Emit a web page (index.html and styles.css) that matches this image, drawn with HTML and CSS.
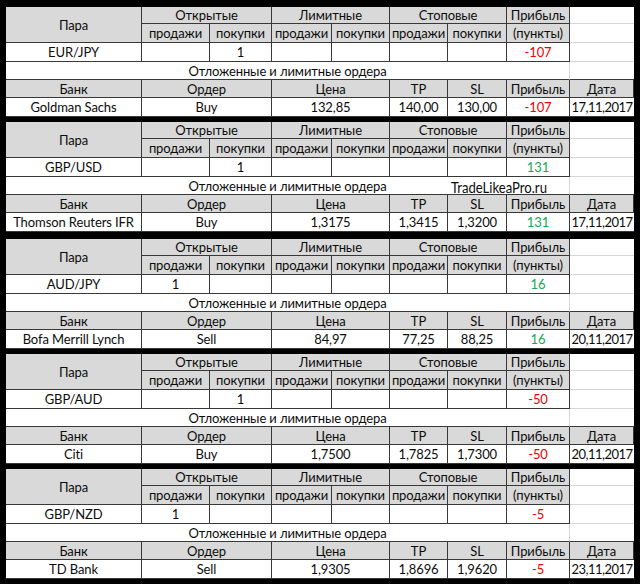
FILE: index.html
```html
<!DOCTYPE html>
<html lang="ru">
<head>
<meta charset="utf-8">
<title>Ордера банков</title>
<link rel="stylesheet" href="styles.css">
</head>
<body>
<div class="sheet">

  <div class="block">
    <div class="c h para">Пара</div>
    <div class="c h s2">Открытые</div>
    <div class="c h s2">Лимитные</div>
    <div class="c h s2">Стоповые</div>
    <div class="c h">Прибыль</div>
    <div class="c g"></div>
    <div class="c h">продажи</div><div class="c h">покупки</div>
    <div class="c h">продажи</div><div class="c h">покупки</div>
    <div class="c h">продажи</div><div class="c h">покупки</div>
    <div class="c h">(пункты)</div>
    <div class="c g"></div>
    <div class="c">EUR/JPY</div><div class="c"></div><div class="c">1</div>
    <div class="c"></div><div class="c"></div><div class="c"></div><div class="c"></div>
    <div class="c neg">-107</div><div class="c g"></div>
    <div class="c wide">Отложенные и лимитные ордера</div><div class="c g g4"></div>
    <div class="c h">Банк</div><div class="c h s2">Ордер</div><div class="c h s2">Цена</div>
    <div class="c h">TP</div><div class="c h">SL</div><div class="c h">Прибыль</div><div class="c h">Дата</div>
    <div class="c">Goldman Sachs</div><div class="c s2">Buy</div><div class="c s2">132,85</div>
    <div class="c">140,00</div><div class="c">130,00</div><div class="c neg">-107</div><div class="c date">17,11,2017</div>
  </div>

  <div class="block">
    <div class="c h para">Пара</div>
    <div class="c h s2">Открытые</div>
    <div class="c h s2">Лимитные</div>
    <div class="c h s2">Стоповые</div>
    <div class="c h">Прибыль</div>
    <div class="c g"></div>
    <div class="c h">продажи</div><div class="c h">покупки</div>
    <div class="c h">продажи</div><div class="c h">покупки</div>
    <div class="c h">продажи</div><div class="c h">покупки</div>
    <div class="c h">(пункты)</div>
    <div class="c g"></div>
    <div class="c">GBP/USD</div><div class="c"></div><div class="c">1</div>
    <div class="c"></div><div class="c"></div><div class="c"></div><div class="c"></div>
    <div class="c pos">131</div><div class="c g"></div>
    <div class="c wide">Отложенные и лимитные ордера</div><div class="c g g4"></div>
    <div class="mark"><span class="mark-text">TradeLikeaPro.ru</span></div>
    <div class="c h">Банк</div><div class="c h s2">Ордер</div><div class="c h s2">Цена</div>
    <div class="c h">TP</div><div class="c h">SL</div><div class="c h">Прибыль</div><div class="c h">Дата</div>
    <div class="c">Thomson Reuters IFR</div><div class="c s2">Buy</div><div class="c s2">1,3175</div>
    <div class="c">1,3415</div><div class="c">1,3200</div><div class="c pos">131</div><div class="c date">17,11,2017</div>
  </div>

  <div class="block shifted">
    <div class="c h para">Пара</div>
    <div class="c h s2">Открытые</div>
    <div class="c h s2">Лимитные</div>
    <div class="c h s2">Стоповые</div>
    <div class="c h">Прибыль</div>
    <div class="c g"></div>
    <div class="c h">продажи</div><div class="c h">покупки</div>
    <div class="c h">продажи</div><div class="c h">покупки</div>
    <div class="c h">продажи</div><div class="c h">покупки</div>
    <div class="c h">(пункты)</div>
    <div class="c g"></div>
    <div class="c">AUD/JPY</div><div class="c">1</div><div class="c"></div>
    <div class="c"></div><div class="c"></div><div class="c"></div><div class="c"></div>
    <div class="c pos">16</div><div class="c g"></div>
    <div class="c wide">Отложенные и лимитные ордера</div><div class="c g g4"></div>
    <div class="c h">Банк</div><div class="c h s2">Ордер</div><div class="c h s2">Цена</div>
    <div class="c h">TP</div><div class="c h">SL</div><div class="c h">Прибыль</div><div class="c h">Дата</div>
    <div class="c">Bofa Merrill Lynch</div><div class="c s2">Sell</div><div class="c s2">84,97</div>
    <div class="c">77,25</div><div class="c">88,25</div><div class="c pos">16</div><div class="c date">20,11,2017</div>
  </div>

  <div class="block">
    <div class="c h para">Пара</div>
    <div class="c h s2">Открытые</div>
    <div class="c h s2">Лимитные</div>
    <div class="c h s2">Стоповые</div>
    <div class="c h">Прибыль</div>
    <div class="c g"></div>
    <div class="c h">продажи</div><div class="c h">покупки</div>
    <div class="c h">продажи</div><div class="c h">покупки</div>
    <div class="c h">продажи</div><div class="c h">покупки</div>
    <div class="c h">(пункты)</div>
    <div class="c g"></div>
    <div class="c">GBP/AUD</div><div class="c"></div><div class="c">1</div>
    <div class="c"></div><div class="c"></div><div class="c"></div><div class="c"></div>
    <div class="c neg">-50</div><div class="c g"></div>
    <div class="c wide">Отложенные и лимитные ордера</div><div class="c g g4"></div>
    <div class="c h">Банк</div><div class="c h s2">Ордер</div><div class="c h s2">Цена</div>
    <div class="c h">TP</div><div class="c h">SL</div><div class="c h">Прибыль</div><div class="c h">Дата</div>
    <div class="c">Citi</div><div class="c s2">Buy</div><div class="c s2">1,7500</div>
    <div class="c">1,7825</div><div class="c">1,7300</div><div class="c neg">-50</div><div class="c date">20,11,2017</div>
  </div>

  <div class="block">
    <div class="c h para">Пара</div>
    <div class="c h s2">Открытые</div>
    <div class="c h s2">Лимитные</div>
    <div class="c h s2">Стоповые</div>
    <div class="c h">Прибыль</div>
    <div class="c g"></div>
    <div class="c h">продажи</div><div class="c h">покупки</div>
    <div class="c h">продажи</div><div class="c h">покупки</div>
    <div class="c h">продажи</div><div class="c h">покупки</div>
    <div class="c h">(пункты)</div>
    <div class="c g"></div>
    <div class="c">GBP/NZD</div><div class="c">1</div><div class="c"></div>
    <div class="c"></div><div class="c"></div><div class="c"></div><div class="c"></div>
    <div class="c neg">-5</div><div class="c g"></div>
    <div class="c wide">Отложенные и лимитные ордера</div><div class="c g g4"></div>
    <div class="c h">Банк</div><div class="c h s2">Ордер</div><div class="c h s2">Цена</div>
    <div class="c h">TP</div><div class="c h">SL</div><div class="c h">Прибыль</div><div class="c h">Дата</div>
    <div class="c">TD Bank</div><div class="c s2">Sell</div><div class="c s2">1,9305</div>
    <div class="c">1,8696</div><div class="c">1,9620</div><div class="c neg">-5</div><div class="c date">23,11,2017</div>
  </div>

</div>
</body>
</html>
```

FILE: styles.css
```css
html, body {
  margin: 0;
  padding: 0;
  background: #000;
}

.sheet {
  width: 640px;
  height: 584px;
  box-sizing: border-box;
  padding: 7px 6px 0 6px;
  display: flex;
  flex-direction: column;
  gap: 5px;
  overflow: hidden;
  font-family: "Lato", "Open Sans", sans-serif;
  font-size: 13px;
  letter-spacing: -0.1px;
  color: #0c0c0c;
}

.block {
  display: grid;
  grid-template-columns: 136px 68px 62px 60px 58px 58px 59px 63px 64px;
  grid-template-rows: 17px 19px 19px 18px 18px 19px;
  background: #fff;
}

.shifted {
  margin-top: 2px;
}

.c {
  box-sizing: border-box;
  background: #fff;
  border-right: 1px solid #383838;
  border-bottom: 1px solid #383838;
  display: flex;
  align-items: center;
  justify-content: center;
  white-space: nowrap;
  line-height: 1;
  padding-top: 1px;
}

.date {
  letter-spacing: -0.5px;
  border-right: none;
}

.h {
  background: #d9d9d9;
}

.para {
  grid-row: span 2;
}

.s2 {
  grid-column: span 2;
}

.g {
  border-right: none;
  border-bottom-color: #d6d6d6;
}

.wide {
  grid-area: 4 / 1 / 5 / 9;
  border-right-color: #d6d6d6;
}

.g4 {
  grid-area: 4 / 9 / 5 / 10;
  border-bottom-color: #383838;
}

.mark {
  grid-area: 4 / 7 / 5 / 9;
  z-index: 1;
  display: flex;
  align-items: center;
  justify-content: flex-start;
  padding-left: 3px;
  padding-top: 1px;
  line-height: 1;
}

.mark-text {
  display: inline-block;
  font-size: 16px;
  letter-spacing: 0;
  transform: scaleX(0.82);
  transform-origin: left center;
  color: #0c0c0c;
}

.neg {
  color: #f00000;
}

.pos {
  color: #14a853;
}
```
